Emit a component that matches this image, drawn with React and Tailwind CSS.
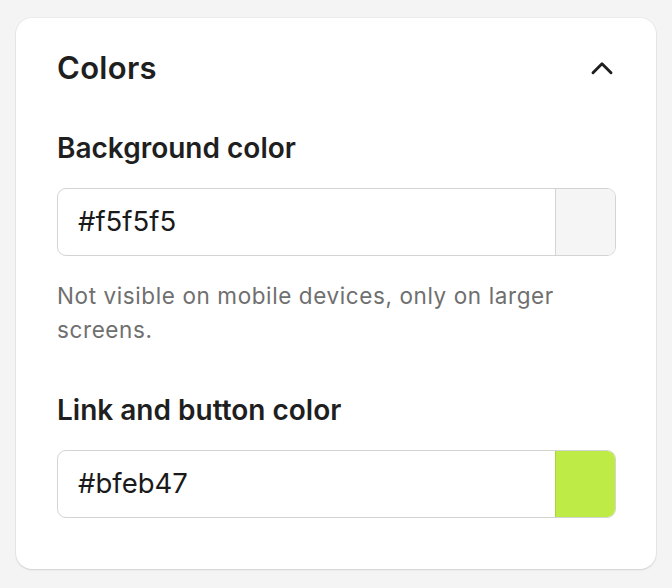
import React from 'react';

const ColorField = ({ value, swatch, border }) => (
  <div className="flex h-[68px] w-full rounded-[9px] border border-[#d4d4d4] overflow-hidden bg-white">
    <div className="flex flex-1 items-center pl-[20px] text-[27.5px] text-[#1a1a1a]">{value}</div>
    <div className={`w-[60px] border-l ${border}`} style={{ backgroundColor: swatch }}></div>
  </div>
);

export default function App() {
  return (
    <div className="min-h-screen bg-[#f4f4f4] px-[16px] pt-[18px] pb-[18px]" style={{ fontFamily: 'Inter, "Noto Sans", sans-serif' }}>
      <div className="rounded-[16px] bg-white pl-[41px] pr-[40px] pt-[32px] pb-[51px] shadow-[0_1px_2px_rgba(0,0,0,0.12),0_0_0_1px_rgba(0,0,0,0.03)]">
        {/* Header */}
        <div className="flex items-center justify-between h-[36px]">
          <h2 className="text-[31px] font-semibold text-[#1f1f1f] tracking-[0.3px]">Colors</h2>
          <svg width="30" height="30" viewBox="0 0 24 24" fill="none" stroke="#1f1f1f" strokeWidth="2.3" strokeLinecap="round" strokeLinejoin="round" className="mr-[-1px]">
            <path d="M4.8 15.8l7.2-7.2 7.2 7.2" />
          </svg>
        </div>

        {/* Background color */}
        <div className="mt-[45px]">
          <label className="block h-[34px] text-[28px] leading-[34px] font-semibold text-[#1f1f1f]">Background color</label>
          <div className="mt-[23px]">
            <ColorField value="#f5f5f5" swatch="#f5f5f5" border="border-[#d4d4d4]" />
          </div>
          <p className="mt-[23px] text-[22.5px] leading-[34px] tracking-[0.6px] text-[#6f6f6f]">
            Not visible on mobile devices, only on larger screens.
          </p>
        </div>

        {/* Link and button color */}
        <div className="mt-[46px]">
          <label className="block h-[34px] text-[28px] leading-[34px] font-semibold text-[#1f1f1f]">Link and button color</label>
          <div className="mt-[23px]">
            <ColorField value="#bfeb47" swatch="#bfeb47" border="border-[#aad43d]" />
          </div>
        </div>
      </div>
    </div>
  );
}
